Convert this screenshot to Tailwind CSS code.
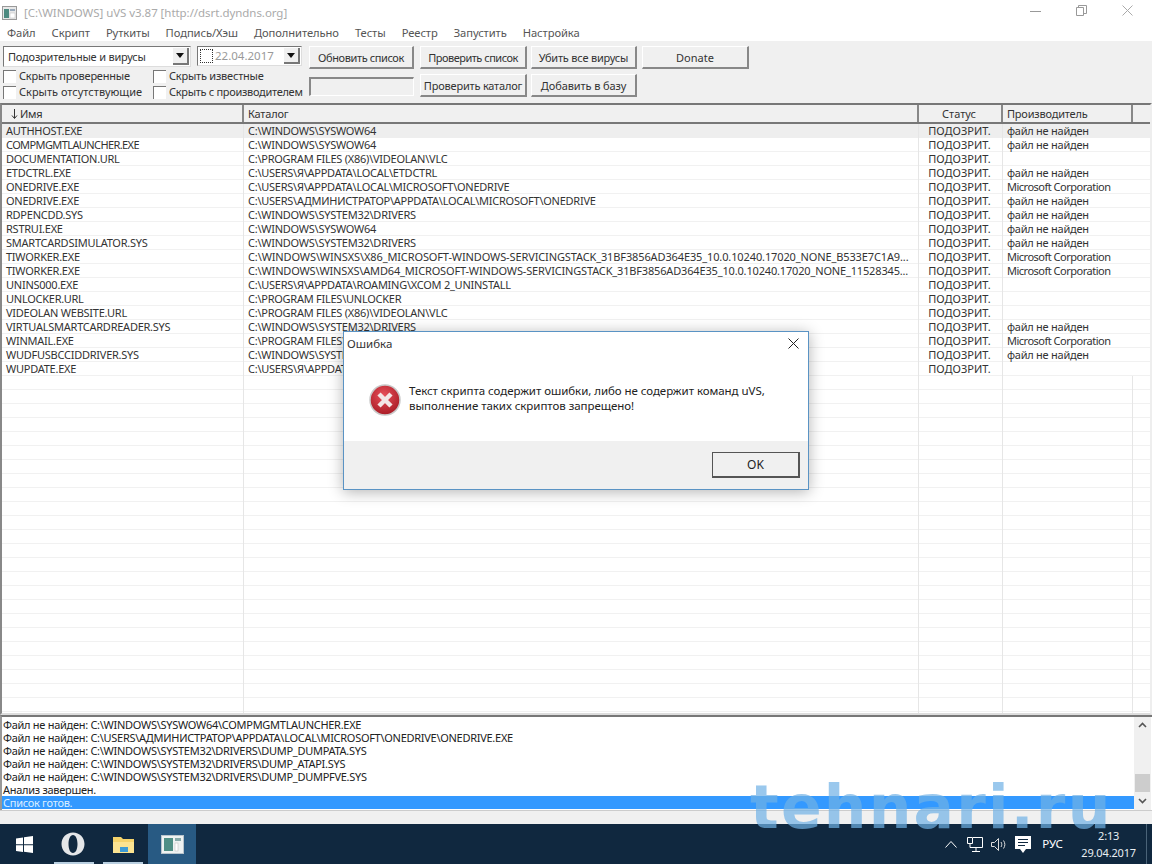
<!DOCTYPE html>
<html lang="ru">
<head>
<meta charset="utf-8">
<script src="https://cdn.jsdelivr.net/npm/@tailwindcss/browser@4"></script>
<title>uVS</title>
</head>
<body class="m-0">
<div class="relative w-[1152px] h-[864px] overflow-hidden flex flex-col bg-white font-['Noto_Sans','Liberation_Sans',sans-serif] text-[11px] leading-[14px] text-[#222]">

  <!-- title bar -->
  <div class="h-[25px] flex items-center bg-white shrink-0">
    <svg class="ml-[2px] w-[15px] h-[14px]" viewBox="0 0 15 14"><rect x=".5" y=".5" width="14" height="13" fill="#e8e8e8" stroke="#999"/><rect x="2" y="3" width="5" height="9" fill="#4d8a80"/><rect x="8" y="3" width="5" height="2" fill="#9ab"/><rect x="8" y="7" width="5" height="5" fill="#fff" stroke="#bbb" stroke-width=".5"/></svg>
    <span class="ml-[7px] text-[11.5px] tracking-[-.05px] text-[#aaa]">[C:\WINDOWS] uVS v3.87 [http://dsrt.dyndns.org]</span>
    <div class="ml-auto flex items-center h-full pb-[4px]">
      <svg class="w-[11px] h-[11px] mr-[35px]" viewBox="0 0 11 11"><path d="M0 6.500h11" stroke="#999" fill="none"/></svg>
      <svg class="w-[11px] h-[11px] mr-[35px]" viewBox="0 0 11 11"><path d="M.5 2.500h7v8h-7zM2.500 2.500v-2h8v8h-3" stroke="#999" fill="none"/></svg>
      <svg class="w-[11px] h-[11px] mr-[19px]" viewBox="0 0 11 11"><path d="M.5.5l10 10M10.500.5l-10 10" stroke="#aaa" fill="none"/></svg>
    </div>
  </div>

  <!-- menu -->
  <div class="h-[16px] flex items-center shrink-0 pl-[7px] gap-[16px] text-[11.2px] tracking-[-.08px] text-[#555] bg-white">
    <span>Файл</span><span>Скрипт</span><span>Руткиты</span><span>Подпись/Хэш</span><span>Дополнительно</span><span>Тесты</span><span>Реестр</span><span>Запустить</span><span>Настройка</span>
  </div>

  <!-- toolbar -->
  <div class="h-[62px] bg-[#f0f0f0] shrink-0 flex pt-[5px] pl-[3px] gap-[6px]">
    <div class="w-[300px] flex flex-col">
      <div class="flex gap-[6px] h-[21px]">
        <div class="w-[188px] h-[21px] bg-white border-t border-l border-[#777] border-r border-b border-r-[#ddd] border-b-[#ddd] flex items-center pl-[4px] text-[#333] tracking-[-.2px]">
          <span>Подозрительные и вирусы</span>
          <div class="ml-auto w-[16px] h-[17px] mr-[1px] bg-[#f0f0f0] border-r-2 border-b-2 border-[#777] flex items-center justify-center"><svg class="w-[8px] h-[5px]" viewBox="0 0 8 5"><path d="M0 0h8L4 5z" fill="#111"/></svg></div>
        </div>
        <div class="w-[105px] h-[20px] bg-white border-t border-l border-[#777] border-r border-b border-r-[#ddd] border-b-[#ddd] flex items-center pl-[2px] text-[#999]">
          <span class="w-[13px] h-[14px] bg-white border border-dotted border-[#333] shrink-0"></span>
          <span class="ml-[2px] text-[11.5px]">22.04.2017</span>
          <div class="ml-auto w-[16px] h-[16px] mr-[1px] bg-[#f0f0f0] border-r-2 border-b-2 border-[#777] flex items-center justify-center"><svg class="w-[8px] h-[5px]" viewBox="0 0 8 5"><path d="M0 0h8L4 5z" fill="#111"/></svg></div>
        </div>
      </div>
      <div class="grid grid-cols-[150px_150px] mt-[1px] text-[#333] tracking-[-.22px]">
        <div class="h-[16px] flex items-center"><span class="w-[13px] h-[13px] bg-white border-t border-l border-[#777] mr-[3px] shrink-0"></span><span>Скрыть проверенные</span></div>
        <div class="h-[16px] flex items-center"><span class="w-[13px] h-[13px] bg-white border-t border-l border-[#777] mr-[3px] shrink-0"></span><span>Скрыть известные</span></div>
        <div class="h-[16px] flex items-center"><span class="w-[13px] h-[13px] bg-white border-t border-l border-[#777] mr-[3px] shrink-0"></span><span class="tracking-normal">Скрыть отсутствующие</span></div>
        <div class="h-[16px] flex items-center whitespace-nowrap"><span class="w-[13px] h-[13px] bg-white border-t border-l border-[#777] mr-[3px] shrink-0"></span><span class="tracking-[-.3px]">Скрыть с производителем</span></div>
      </div>
    </div>
    <div class="flex flex-col w-[105px]">
      <div class="h-[23px] w-[105px] pt-[1px] flex items-center justify-center border-t border-l border-white border-r-2 border-b-2 border-r-[#888] border-b-[#888] text-[#333] tracking-[-.4px]">Обновить список</div>
      <div class="mt-[8px] h-[19px] w-[105px] border-t-2 border-l-2 border-t-[#888] border-l-[#888] border-r border-b border-r-white border-b-white"></div>
    </div>
    <div class="flex flex-col gap-[5px] w-[107px]">
      <div class="h-[23px] pt-[1px] flex items-center justify-center border-t border-l border-white border-r-2 border-b-2 border-r-[#888] border-b-[#888] text-[#333] tracking-[-.5px]">Проверить список</div>
      <div class="h-[23px] pt-[1px] flex items-center justify-center border-t border-l border-white border-r-2 border-b-2 border-r-[#888] border-b-[#888] text-[#333] whitespace-nowrap tracking-[-.2px]">Проверить каталог</div>
    </div>
    <div class="flex flex-col gap-[5px] w-[106px] -ml-[2px]">
      <div class="h-[23px] pt-[1px] flex items-center justify-center border-t border-l border-white border-r-2 border-b-2 border-r-[#888] border-b-[#888] text-[#333] tracking-[-.2px]">Убить все вирусы</div>
      <div class="h-[23px] pt-[1px] flex items-center justify-center border-t border-l border-white border-r-2 border-b-2 border-r-[#888] border-b-[#888] text-[#333] tracking-[-.1px]">Добавить в базу</div>
    </div>
    <div class="w-[107px] -ml-[1px] h-[23px] pt-[1px] flex items-center justify-center border-t border-l border-white border-r-2 border-b-2 border-r-[#888] border-b-[#888] text-[#333]">Donate</div>
  </div>

  <!-- list -->
  <div class="h-[612px] shrink-0 flex flex-col border-t-2 border-t-[#777] border-l-2 border-l-[#888] border-r-2 border-r-[#eee] border-b-2 border-b-[#ddd]">
    <div class="h-[19px] bg-[#f0f0f0] flex shrink-0 border-b-2 border-b-[#777] text-[#333] tracking-[-.2px]">
      <div class="w-[242px] border-r-2 border-r-[#888] pl-[9px] flex items-center"><svg class="w-[7px] h-[10px] mr-[2px]" viewBox="0 0 7 10"><path d="M3.500 0v9M1 6.500l2.500 3 2.500-3" stroke="#333" fill="none"/></svg>Имя</div>
      <div class="w-[675px] border-r-2 border-r-[#888] pl-[4px] flex items-center">Каталог</div>
      <div class="w-[84px] border-r-2 border-r-[#888] pr-[2px] flex items-center justify-center tracking-normal">Статус</div>
      <div class="w-[130px] border-r-2 border-r-[#888] pl-[4px] flex items-center">Производитель</div>
      <div class="flex-1"></div>
    </div>
    <div class="flex-1 flex flex-col overflow-hidden bg-[repeating-linear-gradient(to_bottom,#fff_0,#fff_13px,#f1f1f1_13px,#f1f1f1_14px)] text-[#333] tracking-[-.25px]">
      <div class="h-[14px] flex bg-[#eeeeee] shrink-0"><div class="w-[242px] pl-[4px] border-r border-r-[#e6e6e6]">AUTHHOST.EXE</div><div class="w-[675px] pl-[4px] truncate border-r border-r-[#e6e6e6]">C:\WINDOWS\SYSWOW64</div><div class="w-[84px] pr-[2px] text-center border-r border-r-[#e6e6e6] tracking-normal">ПОДОЗРИТ.</div><div class="w-[130px] pl-[4px]">файл не найден</div></div>
      <div class="h-[14px] flex shrink-0"><div class="w-[242px] pl-[4px] border-r border-r-[#e6e6e6] tracking-[-.6px]">COMPMGMTLAUNCHER.EXE</div><div class="w-[675px] pl-[4px] truncate border-r border-r-[#e6e6e6]">C:\WINDOWS\SYSWOW64</div><div class="w-[84px] pr-[2px] text-center border-r border-r-[#e6e6e6] tracking-normal">ПОДОЗРИТ.</div><div class="w-[130px] pl-[4px]">файл не найден</div></div>
      <div class="h-[14px] flex shrink-0"><div class="w-[242px] pl-[4px] border-r border-r-[#e6e6e6]">DOCUMENTATION.URL</div><div class="w-[675px] pl-[4px] truncate border-r border-r-[#e6e6e6]">C:\PROGRAM FILES (X86)\VIDEOLAN\VLC</div><div class="w-[84px] pr-[2px] text-center border-r border-r-[#e6e6e6] tracking-normal">ПОДОЗРИТ.</div><div class="w-[130px] pl-[4px]"></div></div>
      <div class="h-[14px] flex shrink-0"><div class="w-[242px] pl-[4px] border-r border-r-[#e6e6e6]">ETDCTRL.EXE</div><div class="w-[675px] pl-[4px] truncate border-r border-r-[#e6e6e6]">C:\USERS\Я\APPDATA\LOCAL\ETDCTRL</div><div class="w-[84px] pr-[2px] text-center border-r border-r-[#e6e6e6] tracking-normal">ПОДОЗРИТ.</div><div class="w-[130px] pl-[4px]">файл не найден</div></div>
      <div class="h-[14px] flex shrink-0"><div class="w-[242px] pl-[4px] border-r border-r-[#e6e6e6]">ONEDRIVE.EXE</div><div class="w-[675px] pl-[4px] truncate border-r border-r-[#e6e6e6]">C:\USERS\Я\APPDATA\LOCAL\MICROSOFT\ONEDRIVE</div><div class="w-[84px] pr-[2px] text-center border-r border-r-[#e6e6e6] tracking-normal">ПОДОЗРИТ.</div><div class="w-[130px] pl-[4px] tracking-[-.5px]">Microsoft Corporation</div></div>
      <div class="h-[14px] flex shrink-0"><div class="w-[242px] pl-[4px] border-r border-r-[#e6e6e6]">ONEDRIVE.EXE</div><div class="w-[675px] pl-[4px] truncate border-r border-r-[#e6e6e6]">C:\USERS\АДМИНИСТРАТОР\APPDATA\LOCAL\MICROSOFT\ONEDRIVE</div><div class="w-[84px] pr-[2px] text-center border-r border-r-[#e6e6e6] tracking-normal">ПОДОЗРИТ.</div><div class="w-[130px] pl-[4px]">файл не найден</div></div>
      <div class="h-[14px] flex shrink-0"><div class="w-[242px] pl-[4px] border-r border-r-[#e6e6e6]">RDPENCDD.SYS</div><div class="w-[675px] pl-[4px] truncate border-r border-r-[#e6e6e6]">C:\WINDOWS\SYSTEM32\DRIVERS</div><div class="w-[84px] pr-[2px] text-center border-r border-r-[#e6e6e6] tracking-normal">ПОДОЗРИТ.</div><div class="w-[130px] pl-[4px]">файл не найден</div></div>
      <div class="h-[14px] flex shrink-0"><div class="w-[242px] pl-[4px] border-r border-r-[#e6e6e6]">RSTRUI.EXE</div><div class="w-[675px] pl-[4px] truncate border-r border-r-[#e6e6e6]">C:\WINDOWS\SYSWOW64</div><div class="w-[84px] pr-[2px] text-center border-r border-r-[#e6e6e6] tracking-normal">ПОДОЗРИТ.</div><div class="w-[130px] pl-[4px]">файл не найден</div></div>
      <div class="h-[14px] flex shrink-0"><div class="w-[242px] pl-[4px] border-r border-r-[#e6e6e6]">SMARTCARDSIMULATOR.SYS</div><div class="w-[675px] pl-[4px] truncate border-r border-r-[#e6e6e6]">C:\WINDOWS\SYSTEM32\DRIVERS</div><div class="w-[84px] pr-[2px] text-center border-r border-r-[#e6e6e6] tracking-normal">ПОДОЗРИТ.</div><div class="w-[130px] pl-[4px]">файл не найден</div></div>
      <div class="h-[14px] flex shrink-0"><div class="w-[242px] pl-[4px] border-r border-r-[#e6e6e6]">TIWORKER.EXE</div><div class="w-[675px] pl-[4px] truncate border-r border-r-[#e6e6e6] tracking-[-.12px]">C:\WINDOWS\WINSXS\X86_MICROSOFT-WINDOWS-SERVICINGSTACK_31BF3856AD364E35_10.0.10240.17020_NONE_B533E7C1A9...</div><div class="w-[84px] pr-[2px] text-center border-r border-r-[#e6e6e6] tracking-normal">ПОДОЗРИТ.</div><div class="w-[130px] pl-[4px] tracking-[-.5px]">Microsoft Corporation</div></div>
      <div class="h-[14px] flex shrink-0"><div class="w-[242px] pl-[4px] border-r border-r-[#e6e6e6]">TIWORKER.EXE</div><div class="w-[675px] pl-[4px] truncate border-r border-r-[#e6e6e6] tracking-[-.16px]">C:\WINDOWS\WINSXS\AMD64_MICROSOFT-WINDOWS-SERVICINGSTACK_31BF3856AD364E35_10.0.10240.17020_NONE_11528345...</div><div class="w-[84px] pr-[2px] text-center border-r border-r-[#e6e6e6] tracking-normal">ПОДОЗРИТ.</div><div class="w-[130px] pl-[4px] tracking-[-.5px]">Microsoft Corporation</div></div>
      <div class="h-[14px] flex shrink-0"><div class="w-[242px] pl-[4px] border-r border-r-[#e6e6e6]">UNINS000.EXE</div><div class="w-[675px] pl-[4px] truncate border-r border-r-[#e6e6e6]">C:\USERS\Я\APPDATA\ROAMING\XCOM 2_UNINSTALL</div><div class="w-[84px] pr-[2px] text-center border-r border-r-[#e6e6e6] tracking-normal">ПОДОЗРИТ.</div><div class="w-[130px] pl-[4px]"></div></div>
      <div class="h-[14px] flex shrink-0"><div class="w-[242px] pl-[4px] border-r border-r-[#e6e6e6]">UNLOCKER.URL</div><div class="w-[675px] pl-[4px] truncate border-r border-r-[#e6e6e6]">C:\PROGRAM FILES\UNLOCKER</div><div class="w-[84px] pr-[2px] text-center border-r border-r-[#e6e6e6] tracking-normal">ПОДОЗРИТ.</div><div class="w-[130px] pl-[4px]"></div></div>
      <div class="h-[14px] flex shrink-0"><div class="w-[242px] pl-[4px] border-r border-r-[#e6e6e6]">VIDEOLAN WEBSITE.URL</div><div class="w-[675px] pl-[4px] truncate border-r border-r-[#e6e6e6]">C:\PROGRAM FILES (X86)\VIDEOLAN\VLC</div><div class="w-[84px] pr-[2px] text-center border-r border-r-[#e6e6e6] tracking-normal">ПОДОЗРИТ.</div><div class="w-[130px] pl-[4px]"></div></div>
      <div class="h-[14px] flex shrink-0"><div class="w-[242px] pl-[4px] border-r border-r-[#e6e6e6]">VIRTUALSMARTCARDREADER.SYS</div><div class="w-[675px] pl-[4px] truncate border-r border-r-[#e6e6e6]">C:\WINDOWS\SYSTEM32\DRIVERS</div><div class="w-[84px] pr-[2px] text-center border-r border-r-[#e6e6e6] tracking-normal">ПОДОЗРИТ.</div><div class="w-[130px] pl-[4px]">файл не найден</div></div>
      <div class="h-[14px] flex shrink-0"><div class="w-[242px] pl-[4px] border-r border-r-[#e6e6e6]">WINMAIL.EXE</div><div class="w-[675px] pl-[4px] truncate border-r border-r-[#e6e6e6]">C:\PROGRAM FILES\WINDOWS MAIL</div><div class="w-[84px] pr-[2px] text-center border-r border-r-[#e6e6e6] tracking-normal">ПОДОЗРИТ.</div><div class="w-[130px] pl-[4px] tracking-[-.5px]">Microsoft Corporation</div></div>
      <div class="h-[14px] flex shrink-0"><div class="w-[242px] pl-[4px] border-r border-r-[#e6e6e6]">WUDFUSBCCIDDRIVER.SYS</div><div class="w-[675px] pl-[4px] truncate border-r border-r-[#e6e6e6]">C:\WINDOWS\SYSTEM32\DRIVERS</div><div class="w-[84px] pr-[2px] text-center border-r border-r-[#e6e6e6] tracking-normal">ПОДОЗРИТ.</div><div class="w-[130px] pl-[4px]">файл не найден</div></div>
      <div class="h-[14px] flex shrink-0"><div class="w-[242px] pl-[4px] border-r border-r-[#e6e6e6]">WUPDATE.EXE</div><div class="w-[675px] pl-[4px] truncate border-r border-r-[#e6e6e6]">C:\USERS\Я\APPDATA\LOCAL\WUPDATE</div><div class="w-[84px] pr-[2px] text-center border-r border-r-[#e6e6e6] tracking-normal">ПОДОЗРИТ.</div><div class="w-[130px] pl-[4px]"></div></div>
      <div class="flex-1 flex">
        <div class="w-[242px] border-r border-r-[#e6e6e6]"></div>
        <div class="w-[675px] border-r border-r-[#e6e6e6]"></div>
        <div class="w-[84px] border-r border-r-[#e6e6e6]"></div>
        <div class="w-[130px] border-r border-r-[#e6e6e6]"></div>
      </div>
    </div>
  </div>

  <!-- log -->
  <div class="h-[95px] shrink-0 flex border-t-2 border-t-[#777] border-l-2 border-l-[#999] text-[#222]">
    <div class="flex-1 flex flex-col pt-[1px] leading-[13px] min-w-0 tracking-[-.28px]">
      <div class="h-[13px] pl-[1px]">Файл не найден: C:\WINDOWS\SYSWOW64\COMPMGMTLAUNCHER.EXE</div>
      <div class="h-[13px] pl-[1px]">Файл не найден: C:\USERS\АДМИНИСТРАТОР\APPDATA\LOCAL\MICROSOFT\ONEDRIVE\ONEDRIVE.EXE</div>
      <div class="h-[13px] pl-[1px]">Файл не найден: C:\WINDOWS\SYSTEM32\DRIVERS\DUMP_DUMPATA.SYS</div>
      <div class="h-[13px] pl-[1px]">Файл не найден: C:\WINDOWS\SYSTEM32\DRIVERS\DUMP_ATAPI.SYS</div>
      <div class="h-[13px] pl-[1px]">Файл не найден: C:\WINDOWS\SYSTEM32\DRIVERS\DUMP_DUMPFVE.SYS</div>
      <div class="h-[13px] pl-[1px]">Анализ завершен.</div>
      <div class="h-[13px] pl-[1px] bg-[#3399ff] text-[#dbeeff]">Список готов.</div>
    </div>
    <div class="w-[17px] mr-[1px] bg-[#f0f0f0] flex flex-col items-center shrink-0">
      <svg class="mt-[5px] w-[9px] h-[6px]" viewBox="0 0 9 6"><path d="M1 5l3.500-3.500L8 5" stroke="#555" stroke-width="1.6" fill="none"/></svg>
      <div class="mt-[46px] w-[15px] h-[18px] bg-[#cdcdcd]"></div>
      <svg class="mt-[6px] w-[9px] h-[6px]" viewBox="0 0 9 6"><path d="M1 1l3.500 3.500L8 1" stroke="#555" stroke-width="1.6" fill="none"/></svg>
    </div>
  </div>

  <!-- status bar -->
  <div class="h-[14px] shrink-0 bg-[#f0f0f0] border-t border-t-[#ccc]"></div>

  <!-- taskbar -->
  <div class="h-[40px] shrink-0 bg-[#10283f] flex items-center text-white relative">
    <div class="w-[48px] h-full flex items-center justify-center">
      <svg class="w-[17px] h-[17px]" viewBox="0 0 17 17"><path d="M0 2.400l7-1v6.800H0zM8 1.200L17 0v8.200H8zM0 9.200h7V16l-7-1zM8 9.200h9V17l-9-1.200z" fill="#fff"/></svg>
    </div>
    <div class="w-[50px] h-full flex items-center justify-center relative">
      <svg class="w-[24px] h-[24px]" viewBox="0 0 24 24"><path fill-rule="evenodd" d="M12 .500C18.600.500 23.500 5.500 23.500 12S18.600 23.500 12 23.500.500 18.500.500 12 5.400.500 12 .500zM12 3C9.200 3 7.500 7 7.500 12s1.700 9 4.500 9 4.500-4 4.500-9-1.700-9-4.500-9z" fill="#e4e6e8"/></svg>
      <span class="absolute bottom-0 left-[6px] right-[4px] h-[2px] bg-[#b9cfe0]"></span>
    </div>
    <div class="w-[50px] h-full flex items-center justify-center relative">
      <svg class="w-[23px] h-[20px]" viewBox="0 0 23 20"><path d="M1 3h8l2 2h11v14H1z" fill="#f5d36b"/><path d="M1 8h21v11H1z" fill="#fbe391"/><rect x="8" y="13" width="8" height="5" fill="#3d9bd4"/></svg>
      <span class="absolute bottom-0 left-[5px] right-[5px] h-[2px] bg-[#b9cfe0]"></span>
    </div>
    <div class="w-[48px] h-full bg-[#285a83] flex items-center justify-center">
      <svg class="w-[23px] h-[19px]" viewBox="0 0 23 19"><rect x=".5" y=".5" width="22" height="18" fill="#eef2f2" stroke="#b8c4cc"/><rect x="3" y="3" width="9" height="13" fill="#4f8f86"/><rect x="14" y="3" width="6" height="3" fill="#8aa"/><rect x="14" y="8" width="3" height="8" fill="#fff" stroke="#bbb" stroke-width=".5"/></svg>
    </div>
    <div class="ml-auto flex items-center h-full">
      <svg class="w-[12px] h-[8px] mr-[10px]" viewBox="0 0 12 8"><path d="M.5 7.500L6 1.500l5.500 6" stroke="#fff" fill="none"/></svg>
      <svg class="w-[16px] h-[15px] mr-[8px]" viewBox="0 0 16 15"><path d="M6 .5h9.500v10H6M.5.5h5v6h-5zM3 6.500v4h5M9 11v3M5 14.500h8" stroke="#fff" fill="none"/></svg>
      <svg class="w-[16px] h-[13px] mr-[8px]" viewBox="0 0 16 13"><path d="M.5 4.500h3l4-4v12l-4-4h-3zM10 4c1 1.500 1 3.500 0 5M12.500 2.500c1.800 2.500 1.800 5.500 0 8" stroke="#ddd" fill="none"/></svg>
      <svg class="w-[16px] h-[17px] mr-[11px]" viewBox="0 0 16 17"><path d="M0 0h16v13h-5l-3 4-3-4H0z" fill="#fff"/><path d="M3 3.500h10M3 6.500h10M3 9.500h7" stroke="#10283f"/></svg>
      <span class="text-[11.5px] w-[21px] mr-[18px] whitespace-nowrap">РУС</span>
      <div class="flex flex-col items-center mr-[10px] text-[11px] tracking-[-.15px] leading-[17px] text-[#e8eef3]"><span>2:13</span><span>29.04.2017</span></div>
      <div class="h-full w-[1px] bg-[#4a6378] mr-[5px]"></div>
    </div>
  </div>

  <!-- watermark -->
  <div class="absolute left-[750px] top-[777px] text-[60px] leading-[60px] font-bold font-['DejaVu_Sans',sans-serif] text-[#6fb0e6]/70 tracking-[2.2px] whitespace-nowrap">tehnari.ru</div>

  <!-- dialog -->
  <div class="absolute left-[343px] top-[331px] w-[466px] h-[159px] bg-white border border-[#5a93c4] shadow-[0_2px_14px_rgba(0,0,0,.3)] flex flex-col">
    <div class="h-[23px] flex items-center pl-[3px] text-[11.5px] text-[#333] shrink-0">
      <span>Ошибка</span>
      <svg class="ml-auto mr-[9px] w-[11px] h-[11px]" viewBox="0 0 11 11"><path d="M.5.5l10 10M10.500.5l-10 10" stroke="#222" fill="none"/></svg>
    </div>
    <div class="flex-1 flex items-start pl-[25px] pt-[29px]">
      <svg class="w-[32px] h-[32px] shrink-0" viewBox="0 0 32 32"><defs><radialGradient id="er" cx=".45" cy=".35" r=".75"><stop offset="0" stop-color="#e8505a"/><stop offset="1" stop-color="#a0141e"/></radialGradient></defs><circle cx="16" cy="16" r="15" fill="url(#er)" stroke="#c9c9c9" stroke-width="1.500"/><path d="M10 10l12 12M22 10L10 22" stroke="#f3e6e6" stroke-width="4.500"/></svg>
      <div class="ml-[8px] -mt-[1px] text-[11.5px] leading-[15px] text-[#222] tracking-[-.05px]">
        <div>Текст скрипта содержит ошибки, либо не содержит команд uVS,</div>
        <div>выполнение таких скриптов запрещено!</div>
      </div>
    </div>
    <div class="h-[48px] bg-[#f0f0f0] flex items-center justify-end pr-[8px] shrink-0">
      <div class="w-[88px] h-[26px] bg-[#f0f0f0] border border-[#555] border-r-2 border-b-2 flex items-center justify-center text-[12px] text-[#222]">OK</div>
    </div>
  </div>
</div>
</body>
</html>
